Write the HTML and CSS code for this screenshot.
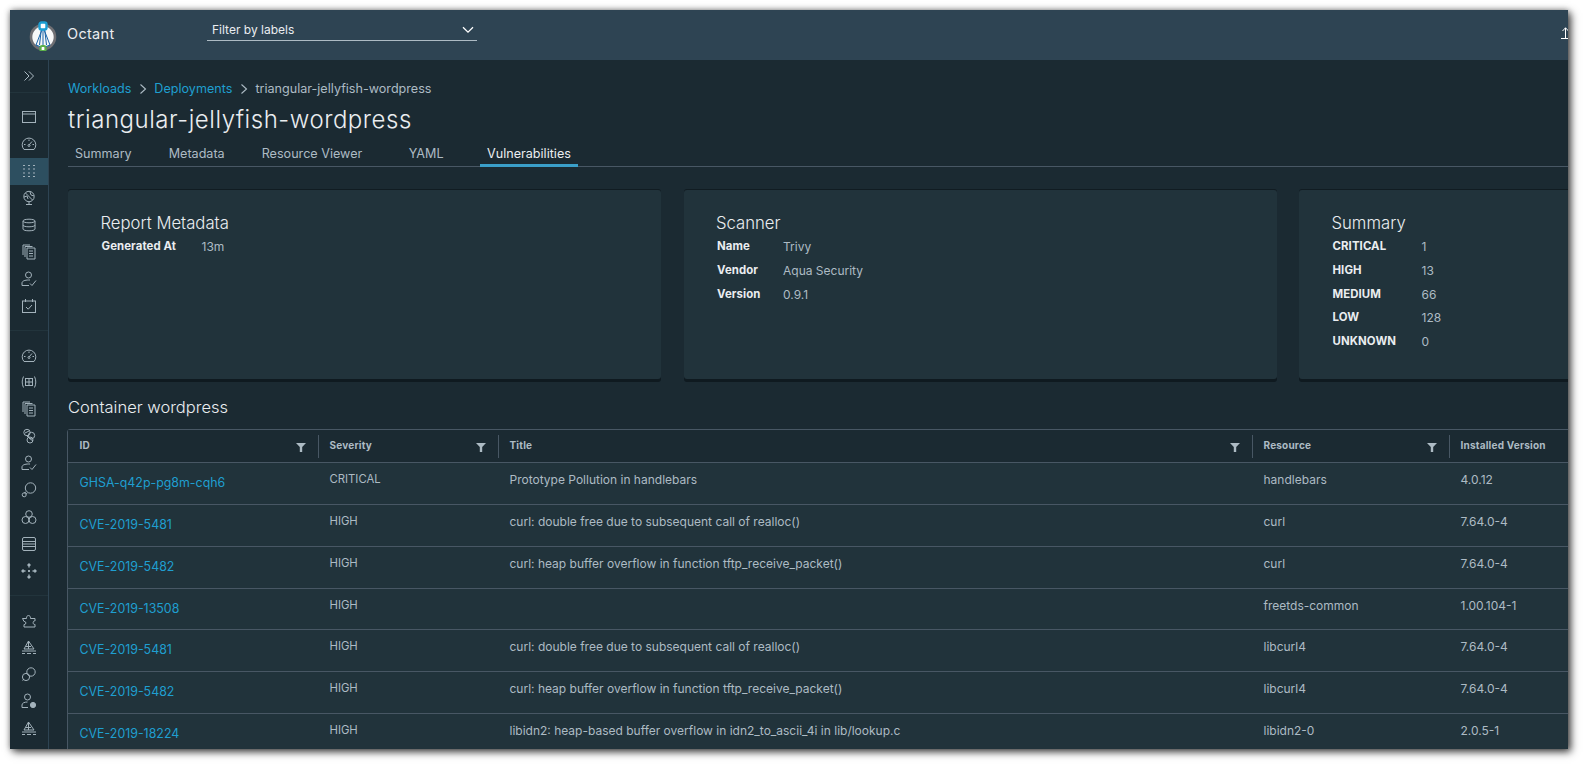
FILE: index.html
```html
<!DOCTYPE html>
<html lang="en">
<head>
<meta charset="utf-8">
<title>Octant</title>
<link rel="stylesheet" href="styles.css">
</head>
<body>
<div class="window">
  <header class="topbar">
    <div class="brand">
      <svg class="logo" viewBox="0 0 28 30" width="28" height="30">
        <circle cx="14" cy="16" r="12" fill="#f7f8f8" stroke="#6f6f73" stroke-width="2.6"/>
        <path d="M14 6 7 24M14 6 21 24M14 6V27M12.5 7 10.5 24M15.5 7 17.5 24" fill="none" stroke="#1a64a8" stroke-width="1"/>
        <path d="M7 24 14 27 21 24" fill="none" stroke="#1a64a8" stroke-width="1.2"/>
        <rect x="10.5" y="1.5" width="7" height="7" rx="2" fill="#fff" stroke="#1c9fd3" stroke-width="2.4"/>
        <rect x="11.5" y="25" width="5" height="5" rx="1.6" fill="#fff" stroke="#5cb04a" stroke-width="2.2"/>
      </svg>
      <span class="brand-name">Octant</span>
    </div>
    <div class="label-filter">
      <span>Filter by labels</span>
      <svg class="filter-chevron" viewBox="0 0 12 8" width="12" height="8"><path d="M1 1.2 6 6.2 11 1.2" fill="none" stroke="#fff" stroke-width="1.3"/></svg>
    </div>
    <svg class="upload" viewBox="0 0 16 14" width="16" height="14"><path d="M1 11.5H15M5.5 11V.8M2.5 4 5.5 .8 8.5 4" fill="none" stroke="#fff" stroke-width="1"/></svg>
  </header>
  <div class="body">
    <nav class="sidebar">
      <div class="collapse">
        <svg viewBox="0 0 12 12" width="12" height="12"><path d="M1.5 1.5 6 6 1.5 10.5M6 1.5 10.5 6 6 10.5" fill="none" stroke="#adbbc4" stroke-width="1"/></svg>
      </div>
      <div class="nav-group">
        <a class="nav-item"><svg viewBox="0 0 16 16"><rect x="1.5" y="2.5" width="13" height="11" /><path d="M1.5 5H14.5"/></svg></a>
        <a class="nav-item"><svg viewBox="0 0 16 16"><path d="M3 13.5A6.8 6.8 0 1 1 13 13.5ZM8 9l3-3.5M8 3.5V5M3 8.5H4.5M11.5 8.5H13"/><circle cx="8" cy="9.5" r="1"/></svg></a>
        <a class="nav-item is-active"><svg viewBox="0 0 16 16"><path class="dots" d="M2 2.5h2M7 2.5h2M12 2.5h2M2 6h2M7 6h2M12 6h2M2 10h2M7 10h2M12 10h2M2 13.5h2M7 13.5h2M12 13.5h2"/></svg></a>
        <a class="nav-item"><svg viewBox="0 0 16 16"><circle cx="8" cy="6.5" r="5.2"/><path d="M4.5 3 11.5 10M5 14.5H11M8 12V14.5M3 7l3-1 1 3M9 2l1 3 3 1"/></svg></a>
        <a class="nav-item"><svg viewBox="0 0 16 16"><path d="M2 4C2 1.6 14 1.6 14 4V12C14 14.4 2 14.4 2 12ZM2 4C2 6.4 14 6.4 14 4M2 8C2 10.4 14 10.4 14 8"/></svg></a>
        <a class="nav-item"><svg viewBox="0 0 16 16"><path d="M6 4H14V15H6ZM8 7H12M8 9.5H12M8 12H12M4 13V2.5H11.5M2 11V1H9"/></svg></a>
        <a class="nav-item"><svg viewBox="0 0 16 16"><circle cx="7.5" cy="4" r="3"/><path d="M1 14.5V12C1 10 4 9 7.5 9H9M1 14.5H8M9 12.5 11 14.5 15 9.5"/></svg></a>
        <a class="nav-item"><svg viewBox="0 0 16 16"><rect x="1.5" y="3" width="13" height="11.5"/><path d="M4.5 1V4M11.5 1V4M5 9 7.2 11.2 11 7"/></svg></a>
      </div>
      <div class="nav-group">
        <a class="nav-item"><svg viewBox="0 0 16 16"><path d="M3 13.5A6.8 6.8 0 1 1 13 13.5ZM8 9l3-3.5M8 3.5V5M3 8.5H4.5M11.5 8.5H13"/><circle cx="8" cy="9.5" r="1"/></svg></a>
        <a class="nav-item"><svg viewBox="0 0 16 16"><path d="M2.5 2.5C.8 6 .8 10 2.5 13.5M13.5 2.5C15.2 6 15.2 10 13.5 13.5"/><rect x="4.5" y="4.5" width="7" height="7"/><path d="M8 4.5V11.5M4.5 8H11.5"/></svg></a>
        <a class="nav-item"><svg viewBox="0 0 16 16"><path d="M6 4H14V15H6ZM8 7H12M8 9.5H12M8 12H12M4 13V2.5H11.5M2 11V1H9"/></svg></a>
        <a class="nav-item"><svg viewBox="0 0 16 16"><circle cx="6" cy="4.5" r="3.2"/><circle cx="10.5" cy="7.5" r="3.2"/><circle cx="9" cy="12" r="3"/><path d="M4 5 8 3M8 10 12 13M6 9 8 7"/></svg></a>
        <a class="nav-item"><svg viewBox="0 0 16 16"><circle cx="7.5" cy="4" r="3"/><path d="M1 14.5V12C1 10 4 9 7.5 9H9M1 14.5H8M9 12.5 11 14.5 15 9.5"/></svg></a>
        <a class="nav-item"><svg viewBox="0 0 16 16"><circle cx="9.5" cy="6" r="5.2"/><circle cx="3.2" cy="12.8" r="2"/><path d="M5 10 3 11M6 11 5 12.5"/></svg></a>
        <a class="nav-item"><svg viewBox="0 0 16 16"><circle cx="8" cy="5" r="3.3"/><circle cx="4.5" cy="11" r="3.5"/><circle cx="11.5" cy="11" r="3.5"/></svg></a>
        <a class="nav-item"><svg viewBox="0 0 16 16"><rect x="1.5" y="1.5" width="13" height="13" rx="1.5"/><path d="M1.5 5.5H14.5M1.5 8H14.5M1.5 10.5H14.5"/></svg></a>
        <a class="nav-item"><svg viewBox="0 0 16 16"><path class="heavy" d="M8 1V4.5M8 11.5V15M1 8H4.5M11.5 8H15M6.5 2.5 8 1 9.5 2.5M6.5 13.5 8 15 9.5 13.5M2.5 6.5 1 8 2.5 9.5M13.5 6.5 15 8 13.5 9.5M8 7V9M7 8H9"/></svg></a>
      </div>
      <div class="nav-group">
        <a class="nav-item"><svg viewBox="0 0 16 16"><path d="M1.5 5.5H5.5C5 1.5 10 1.5 9.5 5.5H14V8C11.5 7.4 11.5 12 14 11.4V14H3V11.5C5.5 12 5.5 8 3 8.5Z"/></svg></a>
        <a class="nav-item"><svg viewBox="0 0 16 16"><path d="M7.5 2 3 10H13L7.5 2ZM7.5 2V10M5 7.5H10M1 12H15M1 14.5H4M6 14.5H10M12 14.5H15"/></svg></a>
        <a class="nav-item"><svg viewBox="0 0 16 16"><circle cx="10" cy="6" r="4.2"/><circle cx="5" cy="11" r="3.6"/><path d="M1.5 14.5 3 13"/></svg></a>
        <a class="nav-item"><svg viewBox="0 0 16 16"><circle cx="6.5" cy="4" r="3"/><path d="M1 14.5V12C1 10 3.5 9 6.5 9M1 14.5H7"/><circle class="fill" cx="12" cy="12" r="2.6"/></svg></a>
        <a class="nav-item"><svg viewBox="0 0 16 16"><path d="M7.5 2 3 10H13L7.5 2ZM7.5 2V10M5 7.5H10M1 12H15M1 14.5H4M6 14.5H10M12 14.5H15"/></svg></a>
      </div>
    </nav>
    <main class="content">
      <div class="crumbs">
        <a class="link">Workloads</a>
        <svg class="crumb-sep" viewBox="0 0 8 12" width="8" height="12"><path d="M1.5 1.5 6.5 6 1.5 10.5" fill="none" stroke="#adbbc4" stroke-width="1.1"/></svg>
        <a class="link">Deployments</a>
        <svg class="crumb-sep" viewBox="0 0 8 12" width="8" height="12"><path d="M1.5 1.5 6.5 6 1.5 10.5" fill="none" stroke="#adbbc4" stroke-width="1.1"/></svg>
        <span>triangular-jellyfish-wordpress</span>
      </div>
      <h1 class="page-title">triangular-jellyfish-wordpress</h1>
      <div class="tabs">
        <a class="tab">Summary</a>
        <a class="tab">Metadata</a>
        <a class="tab">Resource Viewer</a>
        <a class="tab tab-yaml">YAML</a>
        <a class="tab tab-vuln is-active">Vulnerabilities</a>
      </div>
      <section class="cards">
        <article class="card">
          <h2 class="card-title">Report Metadata</h2>
          <dl class="props p1">
            <dt>Generated At</dt><dd>13m</dd>
          </dl>
        </article>
        <article class="card">
          <h2 class="card-title">Scanner</h2>
          <dl class="props p2">
            <dt>Name</dt><dd>Trivy</dd>
            <dt>Vendor</dt><dd>Aqua Security</dd>
            <dt>Version</dt><dd>0.9.1</dd>
          </dl>
        </article>
        <article class="card">
          <h2 class="card-title">Summary</h2>
          <dl class="props p3">
            <dt>CRITICAL</dt><dd>1</dd>
            <dt>HIGH</dt><dd>13</dd>
            <dt>MEDIUM</dt><dd>66</dd>
            <dt>LOW</dt><dd>128</dd>
            <dt>UNKNOWN</dt><dd>0</dd>
          </dl>
        </article>
      </section>
      <h3 class="section-title">Container wordpress</h3>
      <div class="grid">
        <div class="row head">
          <div class="cell"><span>ID</span><svg class="funnel" viewBox="0 0 10 9" width="10" height="9"><path d="M0 0H10L6.2 4V9H3.8V4Z"/></svg></div>
          <div class="cell"><span>Severity</span><svg class="funnel" viewBox="0 0 10 9" width="10" height="9"><path d="M0 0H10L6.2 4V9H3.8V4Z"/></svg></div>
          <div class="cell"><span>Title</span><svg class="funnel" viewBox="0 0 10 9" width="10" height="9"><path d="M0 0H10L6.2 4V9H3.8V4Z"/></svg></div>
          <div class="cell"><span>Resource</span><svg class="funnel" viewBox="0 0 10 9" width="10" height="9"><path d="M0 0H10L6.2 4V9H3.8V4Z"/></svg></div>
          <div class="cell"><span>Installed Version</span></div>
        </div>
        <div class="row"><div class="cell"><a class="link">GHSA-q42p-pg8m-cqh6</a></div><div class="cell sev">CRITICAL</div><div class="cell">Prototype Pollution in handlebars</div><div class="cell">handlebars</div><div class="cell">4.0.12</div></div>
        <div class="row"><div class="cell"><a class="link">CVE-2019-5481</a></div><div class="cell sev">HIGH</div><div class="cell">curl: double free due to subsequent call of realloc()</div><div class="cell">curl</div><div class="cell">7.64.0-4</div></div>
        <div class="row"><div class="cell"><a class="link">CVE-2019-5482</a></div><div class="cell sev">HIGH</div><div class="cell">curl: heap buffer overflow in function tftp_receive_packet()</div><div class="cell">curl</div><div class="cell">7.64.0-4</div></div>
        <div class="row"><div class="cell"><a class="link">CVE-2019-13508</a></div><div class="cell sev">HIGH</div><div class="cell"></div><div class="cell">freetds-common</div><div class="cell">1.00.104-1</div></div>
        <div class="row"><div class="cell"><a class="link">CVE-2019-5481</a></div><div class="cell sev">HIGH</div><div class="cell">curl: double free due to subsequent call of realloc()</div><div class="cell">libcurl4</div><div class="cell">7.64.0-4</div></div>
        <div class="row"><div class="cell"><a class="link">CVE-2019-5482</a></div><div class="cell sev">HIGH</div><div class="cell">curl: heap buffer overflow in function tftp_receive_packet()</div><div class="cell">libcurl4</div><div class="cell">7.64.0-4</div></div>
        <div class="row"><div class="cell"><a class="link">CVE-2019-18224</a></div><div class="cell sev">HIGH</div><div class="cell">libidn2: heap-based buffer overflow in idn2_to_ascii_4i in lib/lookup.c</div><div class="cell">libidn2-0</div><div class="cell">2.0.5-1</div></div>
      </div>
    </main>
  </div>
</div>
</body>
</html>
```
FILE: styles.css
```css
* { box-sizing: border-box; }
html, body { margin: 0; height: 100%; overflow: hidden; background: #fff; }
body { padding: 10px 16px 16px 10px; font-family: Inter, "Noto Sans", sans-serif; }
.window {
  width: 1558px; height: 739px; display: flex; flex-direction: column; overflow: hidden;
  background: #1b2a32; box-shadow: 3px 3px 8px rgba(0,0,0,.7), 0 0 6px rgba(0,0,0,.35);
}
.topbar { height: 50px; flex: none; background: #2e4453; display: flex; align-items: center; position: relative; }
.brand { width: 197px; display: flex; align-items: center; padding-left: 19px; gap: 9px; }
.logo { margin-top: 1px; flex: none; }
.brand-name { font-size: 14.5px; color: #eaedf0; letter-spacing: .3px; margin: -3px 0 0 1px; }
.label-filter {
  width: 270px; height: 21px; display: flex; align-items: center; justify-content: space-between;
  padding: 0 3px 0 5px; border-bottom: 1px solid #adbbc4; margin-top: -10px; font-size: 12px; color: #eaedf0;
}
.upload { position: absolute; left: 1550px; top: 17px; }
.body { flex: 1; display: flex; min-height: 0; }
.sidebar { width: 39px; flex: none; border-right: 1px solid #2e4453; }
.collapse { height: 33px; display: flex; align-items: center; justify-content: center; border-bottom: 1px solid #22343c; }
.nav-group { padding: 11px 0; border-bottom: 1px solid #22343c; }
.nav-group:last-child { border-bottom: 0; }
.nav-item { height: 26.9px; display: flex; align-items: center; justify-content: center; }
.nav-item.is-active { background: #2d4f60; }
.nav-item svg { width: 16px; height: 16px; fill: none; stroke: #a3b2bb; stroke-width: 1; }
.nav-item .fill { fill: #a3b2bb; }
.nav-item .heavy { stroke-width: 1.4; }
.nav-item .dots { stroke-width: 1.2; }
.content { flex: 1; min-width: 0; padding: 19px 0 0 19px; overflow: hidden; color: #adbbc4; }
.link { color: #1f9fd0; }
.crumbs { display: flex; align-items: center; height: 18px; font-size: 12.6px; color: #adbbc4; }
.crumb-sep { margin: 1px 7px 0 8px; }
.page-title { margin: 7px 0 0; font-size: 24px; line-height: 32px; font-weight: 300; letter-spacing: .53px; color: #eaedf0; }
.tabs { display: flex; height: 27px; margin-top: 4px; border-bottom: 1px solid #485764; font-size: 12.6px; }
.tab { padding: 6px 7px 0; height: 26px; margin-right: 23px; }
.tab-yaml { margin-left: 9.5px; margin-right: 22px; }
.tab-vuln { margin-left: 7.5px; }
.tab.is-active { color: #eaedf0; border-bottom: 3px solid #3a9fc9; height: 27px; }
.cards { display: flex; gap: 22px; margin-top: 23px; width: 1600px; }
.card { width: 593px; height: 189px; flex: none; background: #21333b; border-radius: 3px; padding: 22px 32.5px; box-shadow: 0 -1px 0 #111c22, 0 3px 0 #0f1a20; }
.card + .card { margin-left: .5px; }
.card-title { margin: 0; font-size: 16.7px; font-weight: 300; line-height: 22px; color: #eaedf0; }
.props { margin: 1px 0 0 1px; display: grid; font-size: 11.4px; line-height: 23.8px; row-gap: 0; }
.props dt { font-weight: 700; color: #eaedf0; letter-spacing: .1px; }
.props dd { margin: 0; font-size: 12px; }
.p1 { grid-template-columns: 100px 1fr; }
.p2 { grid-template-columns: 66px 1fr; }
.p3 { grid-template-columns: 89px 1fr; }
.section-title { margin: 16px 0 0; font-size: 16.5px; font-weight: 300; line-height: 24px; color: #eaedf0; }
.grid { margin: 10px 0 0 -1px; width: 1600px; border: 1px solid #485764; border-radius: 3px; background: #21333b; }
.row { display: grid; grid-template-columns: 250px 180px 754px 197px 1fr; height: 41.85px; border-top: 1px solid #485764; font-size: 12px; }
.row.head { height: 32px; border-top: 0; background: #1b2a32; font-weight: 700; font-size: 10px; letter-spacing: .2px; }
.cell { padding: 9px 11.5px 0; position: relative; min-width: 0; }
.sev { font-size: 11.3px; }
.cell .link { font-size: 12.4px; position: relative; top: 3px; }
.row.head .cell { padding-top: 9px; }
.row.head .cell + .cell::before { content: ""; position: absolute; left: 0; top: 5px; bottom: 4px; width: 1px; background: #485764; }
.funnel { position: absolute; right: 12.5px; top: 13px; fill: #adbbc4; }
```
